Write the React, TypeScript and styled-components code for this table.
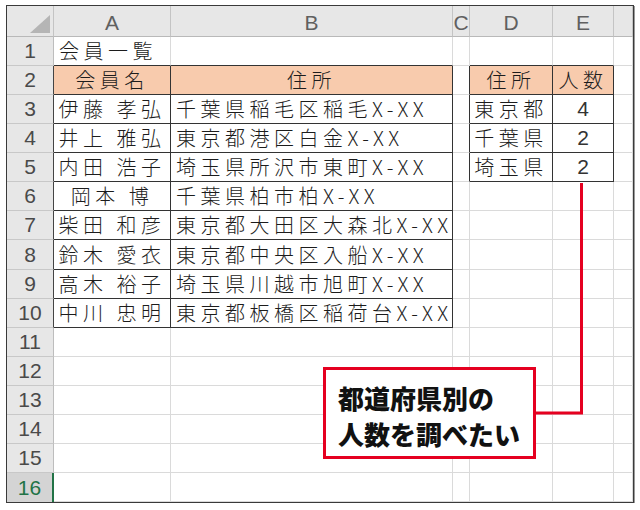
import React from "react";
import styled, { createGlobalStyle, css } from "styled-components";

const Global = createGlobalStyle`
  html, body { margin: 0; padding: 0; background: #ffffff; }
  #root { padding: 5px 0 0 6px; }
`;

const CJK = `"Noto Sans CJK JP", "Noto Sans", sans-serif`;
const LAT = `"Liberation Sans", Arial, sans-serif`;

const Frame = styled.div`
  position: relative;
  box-sizing: border-box;
  width: 628px;
  height: 498px;
  border: 1px solid #3a3a3a;
  box-shadow: 1px 1px 0 #9a9a9a;
  background: #fff;
`;

const Sheet = styled.div`
  display: grid;
  width: 100%;
  height: 100%;
  grid-template-columns: 47px 117px 282px 17px 83px 61px 1fr;
  grid-template-rows: 31px repeat(16, 1fr);
`;

const Corner = styled.div`
  position: relative;
  box-sizing: border-box;
  background: #e7e7e7;
  border-right: 1px solid #c4c4c4;
  border-bottom: 1px solid #b9b9b9;
`;

const Tri = styled.div`
  position: absolute;
  right: 3px;
  bottom: 3px;
  width: 0;
  height: 0;
  border-left: 20px solid transparent;
  border-bottom: 18px solid #b5b5b5;
`;

const ColHead = styled.div`
  box-sizing: border-box;
  display: flex;
  align-items: center;
  justify-content: center;
  background: #e7e7e7;
  border-right: 1px solid #c4c4c4;
  border-bottom: 1px solid #b9b9b9;
  font-family: ${LAT};
  font-size: 21px;
  color: #606060;
  padding-top: 3px;
  overflow: hidden;
`;

const RowHead = styled.div<{ $active?: boolean; $dark?: boolean }>`
  box-sizing: border-box;
  display: flex;
  align-items: flex-end;
  justify-content: center;
  padding-bottom: 2px;
  background: #e7e7e7;
  border-right: 1px solid ${(p) => (p.$dark ? "#444" : "#bdbdbd")};
  border-bottom: 1px solid #c8c8c8;
  font-family: ${LAT};
  font-size: 21px;
  line-height: 24px;
  color: #4a4a4a;
  ${(p) =>
    p.$active &&
    css`
      background: #d4d4d4;
      color: #217346;
      border-right: 2px solid #217346;
      border-bottom: none;
    `}
`;

const Cell = styled.div<{
  $fill?: boolean;
  $r?: boolean;
  $b?: boolean;
  $align?: "left" | "center";
}>`
  box-sizing: border-box;
  display: flex;
  align-items: flex-end;
  justify-content: ${(p) => (p.$align === "center" ? "center" : "flex-start")};
  padding: 0 0 1px ${(p) => (p.$align === "center" ? "0" : "5px")};
  background: ${(p) => (p.$fill ? "#f8cbad" : "#fff")};
  border-right: 1px solid ${(p) => (p.$r ? "#333" : "#dadada")};
  border-bottom: 1px solid ${(p) => (p.$b ? "#333" : "#dadada")};
  font-family: ${CJK};
  font-weight: 300;
  font-size: 20px;
  line-height: 26px;
  letter-spacing: 4.5px;
  color: #1c1c1c;
  white-space: nowrap;
  overflow: hidden;
`;

const Num = styled.span`
  font-family: ${LAT};
  font-size: 21px;
  letter-spacing: 0;
  color: #333;
`;

const Connector = styled.svg`
  position: absolute;
  left: 0;
  top: 0;
  pointer-events: none;
`;

const Callout = styled.div`
  position: absolute;
  left: 316px;
  top: 361px;
  box-sizing: border-box;
  width: 213px;
  height: 92px;
  border: 3px solid #e50020;
  background: #fff;
  padding: 10px 0 0 12px;
  font-family: ${CJK};
  font-weight: 900;
  font-size: 26px;
  line-height: 36px;
  color: #111;
`;

type CellDef = { t?: string; align?: "left" | "center"; num?: boolean };

const cols = ["A", "B", "C", "D", "E", "F"];

const data: Record<number, CellDef[]> = {
  1: [{ t: "会員一覧" }],
  2: [
    { t: "会員名", align: "center" },
    { t: "住所", align: "center" },
    {},
    { t: "住所", align: "center" },
    { t: "人数", align: "center" },
  ],
  3: [
    { t: "伊藤 孝弘", align: "center" },
    { t: "千葉県稲毛区稲毛X-XX" },
    {},
    { t: "東京都", align: "center" },
    { t: "4", align: "center", num: true },
  ],
  4: [
    { t: "井上 雅弘", align: "center" },
    { t: "東京都港区白金X-XX" },
    {},
    { t: "千葉県", align: "center" },
    { t: "2", align: "center", num: true },
  ],
  5: [
    { t: "内田 浩子", align: "center" },
    { t: "埼玉県所沢市東町X-XX" },
    {},
    { t: "埼玉県", align: "center" },
    { t: "2", align: "center", num: true },
  ],
  6: [{ t: "岡本 博", align: "center" }, { t: "千葉県柏市柏X-XX" }],
  7: [{ t: "柴田 和彦", align: "center" }, { t: "東京都大田区大森北X-XX" }],
  8: [{ t: "鈴木 愛衣", align: "center" }, { t: "東京都中央区入船X-XX" }],
  9: [{ t: "高木 裕子", align: "center" }, { t: "埼玉県川越市旭町X-XX" }],
  10: [{ t: "中川 忠明", align: "center" }, { t: "東京都板橋区稲荷台X-XX" }],
};

const inT1 = (c: number, r: number) => c >= 0 && c <= 1 && r >= 2 && r <= 10;
const inT2 = (c: number, r: number) => c >= 3 && c <= 4 && r >= 2 && r <= 5;

const darkRight = (c: number, r: number) =>
  ((c === -1 || c === 0 || c === 1) && r >= 2 && r <= 10) ||
  ((c === 2 || c === 3 || c === 4) && r >= 2 && r <= 5);

const darkBottom = (c: number, r: number) =>
  ((c === 0 || c === 1) && r >= 1 && r <= 10) ||
  ((c === 3 || c === 4) && r >= 1 && r <= 5);

export default function App() {
  const rows = Array.from({ length: 16 }, (_, i) => i + 1);
  return (
    <>
      <Global />
      <Frame>
        <Sheet>
          <Corner>
            <Tri />
          </Corner>
          {cols.map((c) => (
            <ColHead key={c}>{c === "F" ? "" : c}</ColHead>
          ))}
          {rows.map((r) => (
            <React.Fragment key={r}>
              <RowHead $active={r === 16} $dark={darkRight(-1, r)}>
                {r}
              </RowHead>
              {cols.map((_, ci) => {
                const d = data[r]?.[ci] ?? {};
                return (
                  <Cell
                    key={ci}
                    $fill={r === 2 && (inT1(ci, r) || inT2(ci, r))}
                    $r={darkRight(ci, r)}
                    $b={darkBottom(ci, r)}
                    $align={d.align}
                  >
                    {d.num ? <Num>{d.t}</Num> : d.t}
                  </Cell>
                );
              })}
            </React.Fragment>
          ))}
        </Sheet>
        <Connector width="626" height="496" viewBox="0 0 626 496">
          <polyline
            points="574.5,177 574.5,407 529,407"
            fill="none"
            stroke="#e50020"
            strokeWidth="3"
          />
        </Connector>
        <Callout>
          都道府県別の
          <br />
          人数を調べたい
        </Callout>
      </Frame>
    </>
  );
}
